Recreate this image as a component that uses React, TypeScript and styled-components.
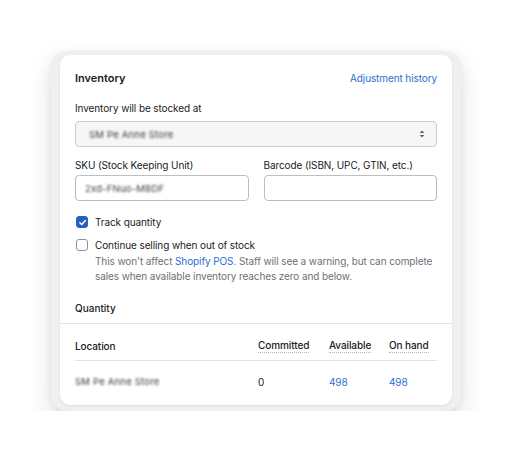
import React from "react";
import styled, { createGlobalStyle } from "styled-components";

const GlobalStyle = createGlobalStyle`
  html, body {
    margin: 0;
    background: #ffffff;
    font-family: Inter, "Noto Sans", "Liberation Sans", sans-serif;
    color: #202223;
  }
`;

const Frame = styled.div`
  box-sizing: border-box;
  width: 410px;
  height: 360px;
  margin: 51px 0 0 51px;
  padding: 4px 9px 6px;
  background: #eeeff1;
  border-radius: 16px;
  box-shadow: 0 10px 24px rgba(0, 0, 0, 0.13), 0 2px 6px rgba(0, 0, 0, 0.06);
`;

const Card = styled.div`
  box-sizing: border-box;
  height: 100%;
  background: #fff;
  border-radius: 10px;
  box-shadow: 0 1px 2px rgba(0, 0, 0, 0.08);
  display: flex;
  flex-direction: column;
  overflow: hidden;
`;

const Section = styled.div`
  padding: 15px 15px 0;
  display: flex;
  flex-direction: column;
`;

const HeaderRow = styled.div`
  display: flex;
  justify-content: space-between;
  align-items: center;
  height: 16px;
`;

const Title = styled.div`
  font-size: 11px;
  font-weight: 600;
`;

const Link = styled.span`
  font-size: 10px;
  letter-spacing: -0.1px;
  color: #2c6ecb;
`;

const Label = styled.div<{ $top: number; $bottom: number }>`
  font-size: 10px;
  letter-spacing: -0.1px;
  line-height: 14px;
  height: 14px;
  margin-top: ${(p) => p.$top}px;
  margin-bottom: ${(p) => p.$bottom}px;
`;

const Blur = styled.span`
  filter: blur(0.8px);
  color: #3a3a3a;
  font-size: 9.5px;
  letter-spacing: 0.2px;
`;

const Select = styled.div`
  box-sizing: border-box;
  height: 26px;
  border: 1px solid #c9cccf;
  border-radius: 4px;
  background: #f6f6f7;
  display: flex;
  align-items: center;
  justify-content: space-between;
  padding: 0 10px 0 13px;
`;

const Fields = styled.div`
  display: grid;
  grid-template-columns: 1fr 1fr;
  column-gap: 15px;
`;

const Input = styled.div`
  box-sizing: border-box;
  height: 26px;
  border: 1px solid #babfc3;
  border-radius: 4px;
  display: flex;
  align-items: center;
  padding: 0 9px;
`;

const CheckRow = styled.div<{ $top: number }>`
  display: flex;
  align-items: center;
  gap: 7px;
  margin-top: ${(p) => p.$top}px;
  font-size: 10px;
  letter-spacing: -0.1px;
  height: 14px;
  padding-left: 1px;
`;

const Box = styled.span<{ $on?: boolean }>`
  box-sizing: border-box;
  width: 12px;
  height: 12px;
  border-radius: 3px;
  border: 1px solid ${(p) => (p.$on ? "#2463bc" : "#8c9196")};
  background: ${(p) => (p.$on ? "#2463bc" : "#fff")};
  display: flex;
  align-items: center;
  justify-content: center;
`;

const Help = styled.p`
  margin: 2px 0 0 20px;
  font-size: 10px;
  letter-spacing: -0.1px;
  line-height: 15px;
  height: 30px;
  color: #6d7175;
  & a {
    color: #2c6ecb;
    text-decoration: none;
  }
`;

const SubTitle = styled.div`
  margin-top: 17px;
  font-size: 10px;
  font-weight: 500;
  height: 14px;
  line-height: 14px;
`;

const Divider = styled.div`
  height: 1px;
  background: #e1e3e5;
  margin-top: 8px;
`;

const Table = styled.div`
  padding: 0 15px;
`;

const TRow = styled.div<{ $head?: boolean }>`
  box-sizing: border-box;
  display: grid;
  grid-template-columns: 183px 71px 60px 1fr;
  align-items: center;
  height: ${(p) => (p.$head ? 37 : 41)}px;
  padding-top: ${(p) => (p.$head ? 7 : 0)}px;
  font-size: 10px;
  letter-spacing: -0.1px;
  border-bottom: ${(p) => (p.$head ? "1px solid #e1e3e5" : "none")};
  font-weight: ${(p) => (p.$head ? 500 : 400)};
`;

const Dotted = styled.span`
  justify-self: start;
  border-bottom: 1px dotted #b5b9bd;
  padding-bottom: 1px;
`;

const Num = styled.span<{ $link?: boolean }>`
  color: ${(p) => (p.$link ? "#2c6ecb" : "#202223")};
`;

const Chevrons = () => (
  <svg width="8" height="10" viewBox="0 0 8 10">
    <path d="M4 1.5 L6.3 4 H1.7 Z" fill="#5c5f62" />
    <path d="M4 8.5 L6.3 6 H1.7 Z" fill="#5c5f62" />
  </svg>
);

const Tick = () => (
  <svg width="9" height="9" viewBox="0 0 10 10">
    <path d="M2 5.2 L4.2 7.3 L8.2 2.8" stroke="#fff" strokeWidth="1.6" fill="none" strokeLinecap="round" strokeLinejoin="round" />
  </svg>
);

export default function App() {
  return (
    <>
      <GlobalStyle />
      <Frame>
        <Card>
          <Section>
            <HeaderRow>
              <Title>Inventory</Title>
              <Link>Adjustment history</Link>
            </HeaderRow>
            <Label $top={15} $bottom={6}>Inventory will be stocked at</Label>
            <Select>
              <Blur>SM Pe Anne Store</Blur>
              <Chevrons />
            </Select>
            <Fields>
              <div>
                <Label $top={11} $bottom={3}>SKU (Stock Keeping Unit)</Label>
                <Input>
                  <Blur>2xd-FNuo-MBDF</Blur>
                </Input>
              </div>
              <div>
                <Label $top={11} $bottom={3}>Barcode (ISBN, UPC, GTIN, etc.)</Label>
                <Input />
              </div>
            </Fields>
            <CheckRow $top={14}>
              <Box $on>
                <Tick />
              </Box>
              Track quantity
            </CheckRow>
            <CheckRow $top={9}>
              <Box />
              Continue selling when out of stock
            </CheckRow>
            <Help>
              This won't affect <a>Shopify POS</a>. Staff will see a warning, but can complete
              sales when available inventory reaches zero and below.
            </Help>
            <SubTitle>Quantity</SubTitle>
          </Section>
          <Divider />
          <Table>
            <TRow $head>
              <span>Location</span>
              <Dotted>Committed</Dotted>
              <Dotted>Available</Dotted>
              <Dotted>On hand</Dotted>
            </TRow>
            <TRow>
              <Blur>SM Pe Anne Store</Blur>
              <Num>0</Num>
              <Num $link>498</Num>
              <Num $link>498</Num>
            </TRow>
          </Table>
        </Card>
      </Frame>
    </>
  );
}
